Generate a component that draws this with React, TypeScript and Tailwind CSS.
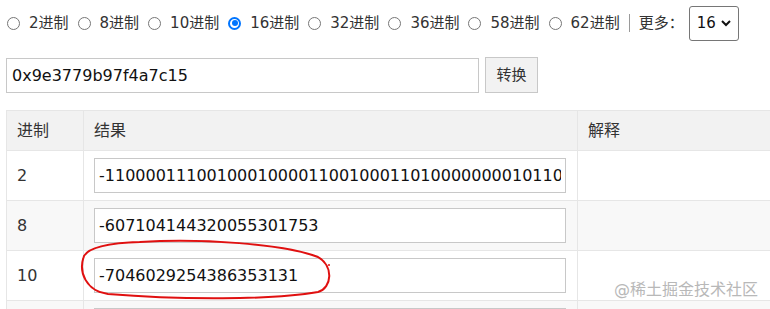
const bases = [
  { label: "2进制", checked: false },
  { label: "8进制", checked: false },
  { label: "10进制", checked: false },
  { label: "16进制", checked: true },
  { label: "32进制", checked: false },
  { label: "36进制", checked: false },
  { label: "58进制", checked: false },
  { label: "62进制", checked: false },
];

const rows = [
  { base: "2", value: "-1100001110010001000011001000110100000000101101010100011", shaded: false },
  { base: "8", value: "-607104144320055301753", shaded: true },
  { base: "10", value: "-7046029254386353131", shaded: false },
  { base: "", value: "", shaded: true },
];

function Radio({ checked }: { checked: boolean }) {
  if (checked) {
    return (
      <span className="flex h-[13px] w-[13px] items-center justify-center rounded-full border-2 border-[#0075ff] bg-white">
        <span className="h-[6px] w-[6px] rounded-full bg-[#0075ff]" />
      </span>
    );
  }
  return <span className="h-[13px] w-[13px] rounded-full border border-[#767676] bg-white" />;
}

export default function App() {
  return (
    <div className="relative h-[309px] w-[770px] overflow-hidden bg-white pl-[6px] font-['DejaVu_Sans','Noto_Sans_CJK_SC',sans-serif] text-[16px] text-[#333]">
      {/* base picker */}
      <div className="flex h-[46px] items-center gap-[9px] pl-px text-[15px]">
        {bases.map((b) => (
          <label key={b.label} className="flex items-center gap-[9px]">
            <Radio checked={b.checked} />
            <span>{b.label}</span>
          </label>
        ))}
        <span className="h-[18px] w-px bg-[#9a9a9a]" />
        <span>更多：</span>
        <div className="ml-[-4px] flex h-[35px] w-[50px] items-center justify-between rounded-[3px] border border-[#767676] pl-[7px] pr-[6px] text-[#111]">
          <span>16</span>
          <svg width="12" height="12" viewBox="0 0 12 12" fill="none">
            <path d="M2 4l4 4 4-4" stroke="#111" strokeWidth="2" />
          </svg>
        </div>
      </div>

      {/* input row */}
      <div className="mt-[12px] flex items-start gap-[6px]">
        <input
          readOnly
          value="0x9e3779b97f4a7c15"
          className="h-[35px] w-[473px] border border-[#c8c8c8] px-[5px] text-[16px] text-[#111] outline-none"
        />
        <button className="-mt-px h-[36px] w-[53px] border border-[#c8c8c8] bg-[#f2f2f2] text-[15px] text-[#333]">
          转换
        </button>
      </div>

      {/* results */}
      <table className="mt-[17px] w-[800px] table-fixed border-collapse text-left">
        <colgroup>
          <col className="w-[77px]" />
          <col className="w-[494px]" />
          <col />
        </colgroup>
        <thead>
          <tr className="h-[40px] bg-[#f2f2f2]">
            <th className="border border-[#e6e6e6] px-[10px] font-normal">进制</th>
            <th className="border border-[#e6e6e6] px-[10px] font-normal">结果</th>
            <th className="border border-[#e6e6e6] px-[10px] font-normal">解释</th>
          </tr>
        </thead>
        <tbody>
          {rows.map((r, i) => (
            <tr key={i} className={r.shaded ? "h-[50px] bg-[#f8f8f8]" : "h-[50px] bg-white"}>
              <td className="border border-[#e6e6e6] px-[10px]">{r.base}</td>
              <td className="border border-[#e6e6e6] pl-[10px]">
                <input
                  readOnly
                  value={r.value}
                  className="h-[35px] w-[472px] border border-[#c8c8c8] bg-white px-[4px] text-[16px] text-[#111] outline-none"
                />
              </td>
              <td className="border border-[#e6e6e6]" />
            </tr>
          ))}
        </tbody>
      </table>

      {/* hand-drawn highlight */}
      <svg className="pointer-events-none absolute left-0 top-0" width="770" height="309" fill="none">
        <path
          d="M140 242 C200 238 285 244 318 257 C334 266 332 288 318 292 C272 300 180 300 108 294 C86 291 78 272 84 256 C89 247 108 243 140 242"
          stroke="#e01010"
          strokeWidth="2"
          strokeLinecap="round"
        />
        <circle cx="329" cy="265" r="1" fill="#e01010" />
      </svg>

      <span className="absolute left-[614px] top-[278px] text-[16px] text-[#b8b8b8] [text-shadow:0_0_2px_#fff]">
        @稀土掘金技术社区
      </span>
    </div>
  );
}
